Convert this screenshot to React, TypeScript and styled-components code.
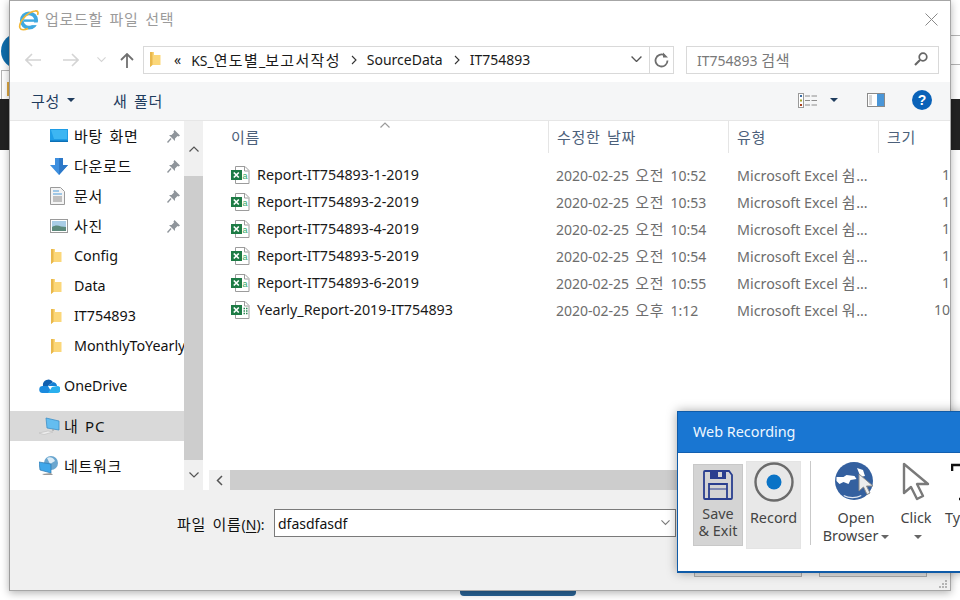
import React from "react";
import styled, { createGlobalStyle } from "styled-components";

const Global = createGlobalStyle`
  html, body { margin: 0; padding: 0; background: #fff; }
  body { font-family: "Noto Sans", "Noto Sans CJK KR", sans-serif; overflow: hidden; }
  * { box-sizing: border-box; }
`;

// hangul runs are wider than the latin text beside them
const Ko = styled.span`
  font-size: 15px;
  letter-spacing: 0.7px;
  word-spacing: 2px;
`;

const CrumbKo = styled(Ko)`
  letter-spacing: 1.3px;
`;

const Desktop = styled.div`
  position: relative;
  width: 960px;
  height: 600px;
  overflow: hidden;
  background: #fff;
`;

const PageTop = styled.div`
  height: 99px;
  position: relative;
  display: flex;
  flex-direction: column;
  align-items: flex-end;
  padding-top: 35px;
`;

const PageLine = styled.div`
  width: 9px;
  height: 1px;
  background: #b4b4b4;
  margin-bottom: 28px;
`;

const PageLogo = styled.div`
  position: absolute;
  left: 1px;
  top: 33px;
  width: 36px;
  height: 36px;
  border-radius: 50%;
  background: #0f6cab;
`;

const PageTab = styled.div`
  position: absolute;
  left: 1px;
  top: 70px;
  width: 30px;
  height: 29px;
  border: 1px solid #b4b4b4;
  border-bottom: none;
  padding: 11px 0 0 5px;
  display: flex;
`;

const PageTabIcon = styled.div`
  width: 5px;
  height: 14px;
  border-left: 2px solid #e0a840;
  background: #3fa9e0;
`;

const PageBand = styled.div`
  height: 51px;
  background: #222;
`;

const PageButton = styled.div`
  width: 116px;
  height: 30px;
  margin: 416px 0 0 460px;
  background: #2a6496;
  border-radius: 4px;
`;

const Dialog = styled.div`
  position: absolute;
  left: 9px;
  top: 0;
  width: 942px;
  height: 591px;
  display: flex;
  flex-direction: column;
  background: #fff;
  border: 1px solid #a6a6a6;
  border-left-color: #9c9c9c;
  box-shadow: 0 2px 8px rgba(0, 0, 0, 0.3);
  font-size: 14px;
`;

const TitleBar = styled.div`
  height: 37px;
  flex: none;
  display: flex;
  align-items: center;
  padding: 0 12px 0 8px;
  gap: 5px;
`;

const TitleText = styled.div`
  flex: 1;
  margin-bottom: 2px;
  color: #9b9b9b;
  font-size: 14px;
`;

const NavBar = styled.div`
  height: 44px;
  flex: none;
  display: flex;
  align-items: flex-start;
  padding: 8px 11px 0 0;
`;

const NavButtons = styled.div`
  width: 133px;
  height: 28px;
  flex: none;
  display: flex;
  align-items: center;
  padding-left: 15px;
`;

const NavSlot = styled.div<{ $w: number }>`
  width: ${(p) => p.$w}px;
  display: flex;
  align-items: center;
`;

const AddressBox = styled.div`
  width: 507px;
  height: 28px;
  flex: none;
  display: flex;
  align-items: center;
  border: 1px solid #d9d9d9;
  padding: 0 0 2px 5px;
  color: #1a1a1a;
  font-size: 14px;
`;

const Crumb = styled.span<{ $ml: number }>`
  margin-left: ${(p) => p.$ml}px;
  white-space: nowrap;
`;

const AddressEnd = styled.div`
  margin-left: auto;
  width: 18px;
  display: flex;
  align-items: center;
`;

const RefreshBox = styled.div`
  width: 25px;
  height: 28px;
  flex: none;
  margin-left: -1px;
  display: flex;
  align-items: center;
  justify-content: center;
  border: 1px solid #d9d9d9;
`;

const SearchBox = styled.div`
  width: 253px;
  height: 28px;
  flex: none;
  margin-left: 12px;
  display: flex;
  align-items: center;
  justify-content: space-between;
  border: 1px solid #d9d9d9;
  padding: 0 10px 2px;
  color: #797979;
  font-size: 14px;
`;

const Toolbar = styled.div`
  height: 39px;
  flex: none;
  display: flex;
  align-items: center;
  background: #f5f6f7;
  border-bottom: 1px solid #e6e6e6;
  padding: 0 0 2px 21px;
  color: #1f3c5e;
  font-size: 14px;
`;

const ToolLabel = styled.span<{ $ml?: number }>`
  margin-left: ${(p) => p.$ml ?? 0}px;
  white-space: nowrap;
`;

const ToolIcons = styled.div`
  margin-left: auto;
  display: flex;
  align-items: center;
  padding-right: 18px;
`;

const ToolGap = styled.div<{ $w: number }>`
  width: ${(p) => p.$w}px;
`;

const Caret = styled.span<{ $ml: number }>`
  display: inline-block;
  margin-left: ${(p) => p.$ml}px;
  width: 0;
  height: 0;
  border-left: 4px solid transparent;
  border-right: 4px solid transparent;
  border-top: 4px solid #1f3c5e;
`;

const Body = styled.div`
  flex: 1;
  min-height: 0;
  display: flex;
`;

const NavPane = styled.div`
  width: 174px;
  flex: none;
  overflow: hidden;
`;

const TreeRow = styled.div<{ $depth: number; $selected?: boolean; $gapTop?: number }>`
  height: 30px;
  margin-top: ${(p) => p.$gapTop ?? 0}px;
  display: flex;
  align-items: center;
  padding-left: ${(p) => (p.$depth === 1 ? 40 : 29)}px;
  background: ${(p) => (p.$selected ? "#d9d9d9" : "transparent")};
  color: #111;
  font-size: 14.3px;
  white-space: nowrap;
  overflow: hidden;
`;

const TreeIcon = styled.span<{ $w?: number }>`
  width: ${(p) => p.$w ?? 24}px;
  flex: none;
  display: flex;
  align-items: center;
`;

const TreeLabel = styled.span`
  flex: 1;
  margin-bottom: 2px;
`;

const PinSlot = styled.span`
  width: 17px;
  flex: none;
  display: flex;
  align-items: center;
`;

const VScroll = styled.div`
  width: 19px;
  flex: none;
  display: flex;
  flex-direction: column;
  background: #f0f0f0;
`;

const ScrollEnd = styled.div<{ $h: number }>`
  height: ${(p) => p.$h}px;
  flex: none;
  display: flex;
  align-items: center;
  justify-content: center;
`;

const VThumb = styled.div`
  flex: 1;
  background: #cdcdcd;
`;

const FilePane = styled.div`
  flex: 1;
  margin-left: 4px;
  min-width: 0;
  display: flex;
  flex-direction: column;
`;

const HeadRow = styled.div`
  position: relative;
  height: 32px;
  flex: none;
  display: grid;
  grid-template-columns: 342px 180px 150px 1fr;
  color: #4c607a;
  font-size: 14px;
`;

const SortMark = styled.span`
  position: absolute;
  left: 173px;
  top: 1px;
  display: flex;
`;

const HeadCell = styled.div<{ $first?: boolean }>`
  display: flex;
  align-items: center;
  padding: 0 0 2px ${(p) => (p.$first ? 24 : 8)}px;
  border-right: 1px solid #e5e5e5;
  &:last-child { border-right: none; }
`;

const FileList = styled.div`
  flex: 1;
  padding-top: 8px;
`;

const FileRow = styled.div`
  height: 27px;
  display: grid;
  grid-template-columns: 342px 180px 150px 1fr;
  align-items: center;
  font-size: 14px;
  white-space: nowrap;
`;

const NameCell = styled.div`
  display: flex;
  align-items: center;
  padding-left: 24px;
  color: #1a1a1a;
  font-size: 14.3px;
  gap: 7px;
`;

const DateCell = styled.div`
  padding-left: 7px;
  color: #6d6d6d;
  word-spacing: 2.5px;
  overflow: hidden;
`;

const TypeCell = styled.div`
  padding-left: 8px;
  color: #6d6d6d;
  font-size: 14.3px;
  overflow: hidden;
`;

const SizeCell = styled.div`
  text-align: right;
  color: #6d6d6d;
`;

const HScroll = styled.div`
  height: 20px;
  flex: none;
  display: flex;
  background: #f0f0f0;
  margin-left: 2px;
`;

const HBtn = styled.div`
  width: 21px;
  flex: none;
  display: flex;
  align-items: center;
  justify-content: center;
`;

const HThumb = styled.div`
  width: 640px;
  background: #cdcdcd;
`;

const Footer = styled.div`
  height: 100px;
  flex: none;
  background: #f0f0f0;
  position: relative;
`;

const FileNameRow = styled.div`
  display: flex;
  align-items: center;
  padding: 19px 0 0 167px;
  color: #111;
  font-size: 14px;
`;

const FileNameLabel = styled.span`
  width: 97px;
  white-space: nowrap;
  u { text-underline-offset: 2px; }
`;

const FileNameInput = styled.div`
  width: 402px;
  height: 28px;
  display: flex;
  align-items: center;
  justify-content: space-between;
  padding: 0 5px 0 3px;
  background: #fff;
  border: 1px solid #7a7a7a;
  color: #111;
`;

const FooterButtons = styled.div`
  position: absolute;
  left: 684px;
  top: 68px;
  display: flex;
  gap: 17px;
`;

const FooterButton = styled.div`
  width: 108px;
  height: 19px;
  background: #e1e1e1;
  border: 1px solid #adadad;
`;

const Grip = styled.svg`
  position: absolute;
  right: 2px;
  bottom: 1px;
`;

const Recorder = styled.div`
  position: absolute;
  left: 677px;
  top: 411px;
  width: 290px;
  height: 162px;
  background: #fff;
  border: 1px solid #0f5ba8;
  border-bottom-width: 2px;
  box-shadow: 0 0 10px rgba(0, 0, 0, 0.35);
  overflow: hidden;
`;

const RecorderTitle = styled.div`
  height: 41px;
  display: flex;
  align-items: center;
  padding: 0 0 2px 15px;
  background: #1976d2;
  border-bottom: 1px solid #125fb0;
  color: #eef6ff;
  font-size: 14.4px;
`;

const Ribbon = styled.div`
  display: flex;
  align-items: flex-start;
  padding: 8px 0 0 15px;
`;

const RibbonSep = styled.div`
  width: 1px;
  height: 84px;
  flex: none;
  margin: 0 9px;
  background: #c9c9c9;
`;

const RibbonButton = styled.div<{ $w: number; $h?: number; $mt?: number; $bg?: string; $line?: string; $ml?: number; $lh?: number }>`
  width: ${(p) => p.$w}px;
  height: ${(p) => p.$h ?? 90}px;
  flex: none;
  margin-top: ${(p) => p.$mt ?? 0}px;
  margin-left: ${(p) => p.$ml ?? 0}px;
  display: flex;
  flex-direction: column;
  align-items: center;
  background: ${(p) => p.$bg ?? "transparent"};
  border: 1px solid ${(p) => p.$line ?? "transparent"};
  color: #444;
  font-size: 14.4px;
  line-height: ${(p) => p.$lh ?? 18}px;
  text-align: center;
  white-space: nowrap;
`;

const RibbonLine = styled.div``;

const RibbonIcon = styled.div<{ $h: number; $pt?: number }>`
  height: ${(p) => p.$h}px;
  padding-top: ${(p) => p.$pt ?? 0}px;
  flex: none;
  display: flex;
  align-items: flex-start;
`;

const RibbonCaret = styled.span`
  display: inline-block;
  margin-left: 3px;
  vertical-align: middle;
  width: 0;
  height: 0;
  border-left: 4px solid transparent;
  border-right: 4px solid transparent;
  border-top: 4px solid #666;
`;

const ExplorerIcon = () => (
  <svg width="22" height="22" viewBox="0 0 22 22">
    <circle cx="11" cy="11.500" r="7.200" fill="none" stroke="#3fa9e0" strokeWidth="3.800" />
    <rect x="6" y="10.400" width="11" height="2.400" fill="#3fa9e0" />
    <rect x="11" y="13.500" width="9" height="2.600" fill="#fff" />
    <path d="M2 19C0 14 9 3 17 2c3-.5 3.500 1.500 2.500 4" fill="none" stroke="#f2b735" strokeWidth="1.700" />
    <path d="M2 19c1 2.500 5 2 8 .5" fill="none" stroke="#f2b735" strokeWidth="1.700" />
  </svg>
);

const Folder = () => (
  <svg width="13" height="17" viewBox="0 0 13 17">
    <path d="M1 1h4v3h6.500v10H3l-2 2z" fill="#fbd77a" />
    <path d="M1 1h2.500v13L1 16z" fill="#e9b84c" />
  </svg>
);

const BackArrow = ({ flip }: { flip?: boolean }) => (
  <svg width="16" height="14" viewBox="0 0 16 14" style={flip ? { transform: "scaleX(-1)" } : undefined}>
    <path d="M1 7h15M7 1 1 7l6 6" fill="none" stroke="#d4d4d4" strokeWidth="1.600" />
  </svg>
);

const UpArrow = () => (
  <svg width="14" height="15" viewBox="0 0 14 15">
    <path d="M7 15V1M1 7l6-6 6 6" fill="none" stroke="#707070" strokeWidth="1.800" />
  </svg>
);

const Chevron = ({ color = "#6a6a6a", size = 10, up }: { color?: string; size?: number; up?: boolean }) => (
  <svg width={size} height={size * 0.6} viewBox="0 0 10 6" style={up ? { transform: "scaleY(-1)" } : undefined}>
    <path d="M.5.5 5 5 9.500.5" fill="none" stroke={color} strokeWidth="1.200" />
  </svg>
);

const CrumbArrow = () => (
  <svg width="6" height="10" viewBox="0 0 6 10">
    <path d="m1 1 4 4-4 4" fill="none" stroke="#333" strokeWidth="1.100" />
  </svg>
);

const Refresh = () => (
  <svg width="15" height="16" viewBox="0 0 15 16">
    <path d="M10.500 3.300A6 6 0 1 0 13.500 8.500" fill="none" stroke="#6e6e6e" strokeWidth="1.800" />
    <path d="M9 .5v5h5z" fill="#6e6e6e" />
  </svg>
);

const Magnifier = () => (
  <svg width="14" height="14" viewBox="0 0 14 14">
    <circle cx="9" cy="5" r="3.800" fill="none" stroke="#666" strokeWidth="1.700" />
    <path d="M6 8 1 13" stroke="#666" strokeWidth="2.200" />
  </svg>
);

const CloseIcon = () => (
  <svg width="13" height="13" viewBox="0 0 13 13">
    <path d="m.5.500 12 12M12.500.500l-12 12" stroke="#8a8a8a" strokeWidth="1" />
  </svg>
);

const ViewIcon = () => (
  <svg width="19" height="15" viewBox="0 0 19 15">
    <rect x=".5" y=".5" width="5" height="14" fill="#fff" stroke="#9a9a9a" />
    <rect x="2" y="2" width="2" height="2" fill="#3c6ea5" />
    <rect x="2" y="6.500" width="2" height="2" fill="#a3a32c" />
    <rect x="2" y="11" width="2" height="2" fill="#a8401f" />
    <path d="M7 3h5M13.500 3H19M7 7.500h5M13.500 7.500H19M7 12h5M13.500 12H19" stroke="#8c8c8c" />
  </svg>
);

const PaneIcon = () => (
  <svg width="18" height="14" viewBox="0 0 18 14">
    <rect x=".5" y=".5" width="17" height="13" fill="#fff" stroke="#8a8a8a" />
    <rect x="10" y="1" width="7" height="12" fill="#4a96d8" />
    <rect x="2" y="2" width="3" height="10" fill="#d8d8d8" />
  </svg>
);

const HelpIcon = () => (
  <svg width="20" height="20" viewBox="0 0 20 20">
    <circle cx="10" cy="10" r="10" fill="#0a62b8" />
    <text x="10" y="15" textAnchor="middle" fontSize="14" fontWeight="700" fontFamily="Liberation Sans" fill="#fff">?</text>
  </svg>
);

const Pin = () => (
  <svg width="13" height="13" viewBox="0 0 13 13">
    <path d="M7.500 0 13 5.500l-1.500 1-1-.5L8 8.500 8 11 2 5l2.500 0L7 2.500 6.500 1.500z" fill="#8f959b" />
    <path d="M4 8.500 .5 12.500" stroke="#8f959b" strokeWidth="1.300" />
  </svg>
);

const DesktopIcon = () => (
  <svg width="18" height="14" viewBox="0 0 18 14">
    <rect width="18" height="13" fill="#1f9de6" />
    <path d="M1 1h16v9H4z" fill="#3db6f2" />
    <rect y="11.500" width="18" height="1.500" fill="#0b6fb5" />
  </svg>
);

const DownloadIcon = () => (
  <svg width="18" height="17" viewBox="0 0 18 17">
    <path d="M5 0h8v7h5l-9 10L0 7h5z" fill="#3d8fdf" />
    <path d="M9 0h4v7h5l-9 10z" fill="#2c78c8" />
  </svg>
);

const DocIcon = () => (
  <svg width="15" height="18" viewBox="0 0 15 18">
    <path d="M.5.500h10l4 4v13H.5z" fill="#f4f4f4" stroke="#9a9a9a" />
    <path d="M3 4h6M3 7h9" stroke="#4c9bd8" />
    <path d="M3 10h9M3 12h9M3 14h9" stroke="#8a8a8a" />
  </svg>
);

const PictureIcon = () => (
  <svg width="18" height="14" viewBox="0 0 18 14">
    <rect x=".5" y=".5" width="17" height="13" fill="#fff" stroke="#9a9a9a" />
    <rect x="2" y="2" width="14" height="6" fill="#a9cde6" />
    <path d="M2 8c3-2 6-2 9-.5l5 .5v4H2z" fill="#5c8a7c" />
  </svg>
);

const OneDriveIcon = () => (
  <svg width="21" height="14" viewBox="0 0 21 14">
    <path d="M4 7a5.500 5.500 0 0 1 10-4l-5 4z" fill="#0f5fb0" />
    <path d="M14 3a4.500 4.500 0 0 1 4 4h-9z" fill="#1480d4" />
    <path d="M3.500 14A3.500 3.500 0 0 1 4 7h5l4 7z" fill="#1a8ade" />
    <path d="M9 14l4-6 5-1a3.500 3.500 0 0 1 0 7z" fill="#2ab0ee" />
  </svg>
);

const ThisPcIcon = () => (
  <svg width="21" height="18" viewBox="0 0 21 18">
    <path d="M7 1l13 3v9L8 11z" fill="#64bdf0" stroke="#3d8fc6" strokeWidth=".8" />
    <path d="M14 12v2" stroke="#9a9a9a" />
    <path d="M0 16l9-2 5 1-9 2.500z" fill="#eee" stroke="#bdbdbd" strokeWidth=".6" />
  </svg>
);

const NetworkIcon = () => (
  <svg width="20" height="20" viewBox="0 0 20 20">
    <circle cx="12" cy="7" r="7" fill="#6aa6cf" />
    <path d="M8 2c3-2 7 0 8 3l-5 3z" fill="#dcecf6" />
    <path d="M0 6l12 2v9L1 14z" fill="#3fa7ea" stroke="#2c79b0" strokeWidth=".7" />
    <path d="M3 18l9-1 2 2H5z" fill="#9a9a9a" />
  </svg>
);

const ExcelIcon = ({ grid }: { grid?: boolean }) => (
  <svg width="19" height="18" viewBox="0 0 19 18">
    <path d="M4.500.500h9.500l4 4v13H4.500z" fill="#fff" stroke="#9c9c9c" />
    <path d="M13.500 1v4h4" fill="none" stroke="#9c9c9c" />
    <rect y="4" width="11" height="10" fill="#1d7b45" />
    <path d="m2.800 6.500 5 5M7.800 6.500l-5 5" stroke="#fff" strokeWidth="1.700" />
    {grid ? (
      <path d="M12.500 7.500h1.500M15 7.500h1.500M12.500 10h1.500M15 10h1.500M12.500 12.500h1.500M15 12.500h1.500" stroke="#2c8a55" strokeWidth="1.300" />
    ) : (
      <text x="11.600" y="12.500" fontSize="9" fontFamily="Liberation Sans" fill="#2fa866">a</text>
    )}
  </svg>
);

const SaveIcon = () => (
  <svg width="30" height="32" viewBox="0 0 30 32">
    <path d="M1 3v26a1 1 0 0 0 1 1h26a1 1 0 0 0 1-1V6l-3-4H2a1 1 0 0 0-1 1z" fill="none" stroke="#2a3f8f" strokeWidth="1.800" />
    <path d="M7 2h16v8H7z" fill="#2a3f8f" />
    <rect x="15" y="3" width="4" height="5" fill="#d4d4d4" />
    <path d="M6 30V15h18v15" fill="none" stroke="#2a3f8f" strokeWidth="1.800" />
    <path d="M6 20h18" stroke="#2a3f8f" strokeWidth="1" />
  </svg>
);

const RecordIcon = () => (
  <svg width="40" height="40" viewBox="0 0 40 40">
    <circle cx="20" cy="20" r="18.500" fill="none" stroke="#6b6b6b" strokeWidth="2.400" />
    <circle cx="20" cy="20" r="7.500" fill="#0a73c6" />
  </svg>
);

const GlobeIcon = () => (
  <svg width="42" height="38" viewBox="0 0 42 38">
    <circle cx="19" cy="19" r="19" fill="#34609f" />
    <path d="M1.500 15h7l3-2 8 1 2 3-6 1-2 4-5-2-4 2-3-3z" fill="#fff" />
    <path d="M22 6l6 2 2 6-5 1-1-4z" fill="#fff" />
    <path d="M9 33c5 2.500 12 2.500 17 0l.5 1c-6 3-12 3-18 0z" fill="#dfe6f0" />
    <path d="M24 12v17l4.500-4 3.500 7.500 3-1.500-3.500-7H38z" fill="#ededed" stroke="#8a8a8a" />
  </svg>
);

const ClickCursor = () => (
  <svg width="30" height="40" viewBox="0 0 30 40">
    <path d="M3 2v29l7-6 6 12 6-3-6-12h11z" fill="#fff" stroke="#7a7a7a" strokeWidth="2.400" strokeLinejoin="round" />
  </svg>
);

const TypeGlyph = () => (
  <svg width="20" height="40" viewBox="0 0 20 40">
    <path d="M1 9V3h18M12 3v34M8 37h8" fill="none" stroke="#111" strokeWidth="2.600" />
  </svg>
);

const treeItems = [
  { label: "바탕 화면", ko: true, icon: <DesktopIcon />, pinned: true },
  { label: "다운로드", ko: true, icon: <DownloadIcon />, pinned: true },
  { label: "문서", ko: true, icon: <DocIcon />, pinned: true },
  { label: "사진", ko: true, icon: <PictureIcon />, pinned: true },
  { label: "Config", icon: <Folder /> },
  { label: "Data", icon: <Folder /> },
  { label: "IT754893", icon: <Folder /> },
  { label: "MonthlyToYearly", icon: <Folder /> },
];

const files = [
  { name: "Report-IT754893-1-2019", day: "오전", time: "10:52", kind: "쉼", size: "1" },
  { name: "Report-IT754893-2-2019", day: "오전", time: "10:53", kind: "쉼", size: "1" },
  { name: "Report-IT754893-4-2019", day: "오전", time: "10:54", kind: "쉼", size: "1" },
  { name: "Report-IT754893-5-2019", day: "오전", time: "10:54", kind: "쉼", size: "1" },
  { name: "Report-IT754893-6-2019", day: "오전", time: "10:55", kind: "쉼", size: "1" },
  { name: "Yearly_Report-2019-IT754893", day: "오후", time: "1:12", kind: "워", size: "10", grid: true },
];

export default function App() {
  return (
    <Desktop>
      <Global />
      <PageTop>
        <PageLogo />
        <PageTab><PageTabIcon /></PageTab>
        <PageLine />
        <PageLine />
      </PageTop>
      <PageBand />
      <PageButton />

      <Dialog>
        <TitleBar>
          <ExplorerIcon />
          <TitleText><Ko>업로드할 파일 선택</Ko></TitleText>
          <CloseIcon />
        </TitleBar>
        <NavBar>
          <NavButtons>
            <NavSlot $w={38}><BackArrow /></NavSlot>
            <NavSlot $w={34}><BackArrow flip /></NavSlot>
            <NavSlot $w={23}><Chevron color="#d4d4d4" size={9} /></NavSlot>
            <NavSlot $w={14}><UpArrow /></NavSlot>
          </NavButtons>
          <AddressBox>
            <Folder />
            <Crumb $ml={12}>«</Crumb>
            <Crumb $ml={10}>KS_<CrumbKo>연도별</CrumbKo>_<CrumbKo>보고서작성</CrumbKo></Crumb>
            <Crumb $ml={10}><CrumbArrow /></Crumb>
            <Crumb $ml={10}>SourceData</Crumb>
            <Crumb $ml={11}><CrumbArrow /></Crumb>
            <Crumb $ml={10}>IT754893</Crumb>
            <AddressEnd><Chevron color="#555" size={11} /></AddressEnd>
          </AddressBox>
          <RefreshBox><Refresh /></RefreshBox>
          <SearchBox>
            <span>IT754893 <Ko>검색</Ko></span>
            <Magnifier />
          </SearchBox>
        </NavBar>
        <Toolbar>
          <ToolLabel><Ko>구성</Ko></ToolLabel>
          <Caret $ml={7} />
          <ToolLabel $ml={38}><Ko>새 폴더</Ko></ToolLabel>
          <ToolIcons>
            <ViewIcon />
            <Caret $ml={13} />
            <ToolGap $w={29} />
            <PaneIcon />
            <ToolGap $w={27} />
            <HelpIcon />
          </ToolIcons>
        </Toolbar>
        <Body>
          <NavPane>
            {treeItems.map((item) => (
              <TreeRow key={item.label} $depth={1}>
                <TreeIcon>{item.icon}</TreeIcon>
                <TreeLabel>{item.ko ? <Ko>{item.label}</Ko> : item.label}</TreeLabel>
                {item.pinned && <PinSlot><Pin /></PinSlot>}
              </TreeRow>
            ))}
            <TreeRow $depth={0} $gapTop={10}>
              <TreeIcon $w={25}><OneDriveIcon /></TreeIcon>
              <TreeLabel>OneDrive</TreeLabel>
            </TreeRow>
            <TreeRow $depth={0} $gapTop={10} $selected>
              <TreeIcon $w={25}><ThisPcIcon /></TreeIcon>
              <TreeLabel><Ko>내 PC</Ko></TreeLabel>
            </TreeRow>
            <TreeRow $depth={0} $gapTop={10}>
              <TreeIcon $w={25}><NetworkIcon /></TreeIcon>
              <TreeLabel><Ko>네트워크</Ko></TreeLabel>
            </TreeRow>
          </NavPane>
          <VScroll>
            <ScrollEnd $h={55}><Chevron up color="#555" size={10} /></ScrollEnd>
            <VThumb />
            <ScrollEnd $h={30}><Chevron color="#555" size={10} /></ScrollEnd>
          </VScroll>
          <FilePane>
            <HeadRow>
              <SortMark><Chevron up color="#9a9a9a" size={10} /></SortMark>
              <HeadCell $first><Ko>이름</Ko></HeadCell>
              <HeadCell><Ko>수정한 날짜</Ko></HeadCell>
              <HeadCell><Ko>유형</Ko></HeadCell>
              <HeadCell><Ko>크기</Ko></HeadCell>
            </HeadRow>
            <FileList>
              {files.map((f) => (
                <FileRow key={f.name}>
                  <NameCell><ExcelIcon grid={f.grid} />{f.name}</NameCell>
                  <DateCell>2020-02-25 <Ko>{f.day}</Ko> {f.time}</DateCell>
                  <TypeCell>Microsoft Excel <Ko>{f.kind}</Ko>...</TypeCell>
                  <SizeCell>{f.size}</SizeCell>
                </FileRow>
              ))}
            </FileList>
            <HScroll>
              <HBtn>
                <svg width="7" height="11" viewBox="0 0 7 11">
                  <path d="M6 1 1.500 5.500 6 10" fill="none" stroke="#555" strokeWidth="1.500" />
                </svg>
              </HBtn>
              <HThumb />
            </HScroll>
          </FilePane>
        </Body>
        <Footer>
          <FileNameRow>
            <FileNameLabel><Ko>파일 이름</Ko>(<u>N</u>):</FileNameLabel>
            <FileNameInput>
              dfasdfasdf
              <Chevron color="#7a7a7a" size={9} />
            </FileNameInput>
          </FileNameRow>
          <FooterButtons>
            <FooterButton />
            <FooterButton />
          </FooterButtons>
          <Grip width="10" height="10" viewBox="0 0 10 10">
            <path d="M7 1h2v2H7zM4 4h2v2H4zM7 4h2v2H7zM1 7h2v2H1zM4 7h2v2H4zM7 7h2v2H7z" fill="#b5b5b5" />
          </Grip>
        </Footer>
      </Dialog>

      <Recorder>
        <RecorderTitle>Web Recording</RecorderTitle>
        <Ribbon>
          <RibbonButton $w={50} $h={82} $mt={3} $bg="#d4d4d4" $line="#c8c8c8" $lh={17}>
            <RibbonIcon $h={40} $pt={4}><SaveIcon /></RibbonIcon>
            <RibbonLine>Save</RibbonLine>
            <RibbonLine>&amp; Exit</RibbonLine>
          </RibbonButton>
          <RibbonButton $w={55} $h={88} $ml={3} $bg="#e8e8e8" $line="#e4e4e4">
            <RibbonIcon $h={47}><RecordIcon /></RibbonIcon>
            <RibbonLine>Record</RibbonLine>
          </RibbonButton>
          <RibbonSep />
          <RibbonButton $w={70} $h={88} $ml={1}>
            <RibbonIcon $h={47}><GlobeIcon /></RibbonIcon>
            <RibbonLine>Open</RibbonLine>
            <RibbonLine>Browser<RibbonCaret /></RibbonLine>
          </RibbonButton>
          <RibbonButton $w={50} $h={88}>
            <RibbonIcon $h={47}><ClickCursor /></RibbonIcon>
            <RibbonLine>Click</RibbonLine>
            <RibbonLine><RibbonCaret /></RibbonLine>
          </RibbonButton>
          <RibbonButton $w={40} $h={88}>
            <RibbonIcon $h={47}><TypeGlyph /></RibbonIcon>
            <RibbonLine>Type</RibbonLine>
          </RibbonButton>
        </Ribbon>
      </Recorder>
    </Desktop>
  );
}
